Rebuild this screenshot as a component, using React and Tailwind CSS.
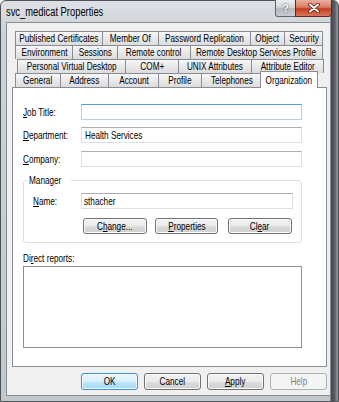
import React from 'react';

const font = "font-['Liberation_Sans',Arial,sans-serif]";

const tabRows = [
  {
    cls: 'ml-[3px]',
    tabs: [
      ['Published Certificates', 'w-[88px]'],
      ['Member Of', 'w-[57px]'],
      ['Password Replication', 'w-[93px]'],
      ['Object', 'w-[35px]'],
      ['Security', 'w-[39px]'],
    ],
  },
  {
    cls: 'ml-[3px]',
    tabs: [
      ['Environment', 'w-[58px]'],
      ['Sessions', 'w-[46px]'],
      ['Remote control', 'w-[74px]'],
      ['Remote Desktop Services Profile', 'w-[133px]'],
    ],
  },
  {
    cls: 'ml-[5px]',
    tabs: [
      ['Personal Virtual Desktop', 'w-[109px]'],
      ['COM+', 'w-[54px]'],
      ['UNIX Attributes', 'w-[74px]'],
      ['Attribute Editor', 'w-[73px]'],
    ],
  },
  {
    cls: 'ml-[3px]',
    tabs: [
      ['General', 'w-[46px]'],
      ['Address', 'w-[49px]'],
      ['Account', 'w-[51px]'],
      ['Profile', 'w-[44px]'],
      ['Telephones', 'w-[61px]'],
    ],
  },
];

// the dialog font is narrow (Tahoma-like); squeeze Liberation Sans to match
function N({ children, left }) {
  return (
    <span className={`inline-block whitespace-nowrap scale-x-[0.78] ${left ? 'origin-left' : 'origin-center'}`}>
      {children}
    </span>
  );
}

function Tab({ label, w, first }) {
  return (
    <div
      className={`${w} ${first ? '' : '-ml-px'} flex h-[14px] shrink-0 justify-center border border-b-0 border-[#898c95] bg-[linear-gradient(#f7f7f7,#e9e9e9_50%,#dcdcdc)] text-[10.5px] leading-[13px] text-black`}
    >
      <N>{label}</N>
    </div>
  );
}

function Field({ label, value, focused }) {
  return (
    <div className="flex items-center">
      <div className="w-[58px] shrink-0 text-[10.5px] leading-[12px]">
        <N left>{label}</N>
      </div>
      <div
        className={`h-[16px] flex-1 overflow-hidden border bg-white pl-[3px] text-[10.5px] leading-[14px] ${
          focused ? 'border-[#b5d0ea] border-t-[#5e9bd3]' : 'border-[#dbdfe6] border-t-[#abadb3]'
        }`}
      >
        <N left>{value}</N>
      </div>
    </div>
  );
}

function Btn({ children, w = 'w-[57px]', h = 'h-[17px]', kind = 'normal' }) {
  const look = {
    normal:
      'border-[#707070] bg-[linear-gradient(#f2f2f2_0%,#ebebeb_50%,#dddddd_51%,#cfcfcf_100%)] text-black shadow-[inset_0_0_0_1px_#fbfbfb]',
    def: 'border-[#3c8fc9] bg-[linear-gradient(#eaf6fd_0%,#d9f0fc_50%,#bee6fd_51%,#a7d9f5_100%)] text-black shadow-[inset_0_0_0_1px_#f4fbff]',
    off: 'border-[#adb2b5] bg-[#f4f4f4] text-[#838383]',
  }[kind];
  return (
    <div className={`flex ${w} ${h} shrink-0 items-center justify-center rounded-[3px] border text-[10.5px] leading-none ${look}`}>
      <N>{children}</N>
    </div>
  );
}

export default function App() {
  return (
    <div className={`h-[402px] w-[339px] bg-white ${font}`}>
      <div className="flex h-full w-full flex-col rounded-t-[6px] border border-[#4d5257] bg-[linear-gradient(to_right,transparent_329px,#44484d_330px,#5c6065_334px,#8a8e93_336px),linear-gradient(#dde1e5,#cdd2d7_30px,#c3c8cd)]">
        {/* title bar */}
        <div className="flex h-[21px] shrink-0 items-start pl-[5px] pr-[6px]">
          <div className="pt-[4px] text-[12px] leading-[14px] text-black">
            <N left>svc_medicat Properties</N>
          </div>
          <div className="ml-auto -mt-px flex">
            <div className="flex h-[17px] w-[21px] items-center justify-center rounded-bl-[3px] border border-t-0 border-[#5f656b] bg-[linear-gradient(#eceef0,#d3d7db_45%,#b4b9be_55%,#c9cdd1)] text-[11px] font-bold leading-none text-white [text-shadow:0_0_2px_#2a2d30]">
              ?
            </div>
            <div className="-ml-px flex h-[17px] w-[37px] items-center justify-center rounded-br-[4px] border border-t-0 border-[#6a241a] bg-[linear-gradient(#eab1a2,#d97a62_45%,#c53d20_55%,#d8775e)]">
              <svg width="12" height="10" viewBox="0 0 12 10">
                <path d="M2 1.5 L10 8.5 M10 1.5 L2 8.5" stroke="#5a1a10" strokeWidth="3.6" strokeLinecap="round" />
                <path d="M2 1.5 L10 8.5 M10 1.5 L2 8.5" stroke="#ffffff" strokeWidth="2" strokeLinecap="round" />
              </svg>
            </div>
          </div>
        </div>

        {/* client area */}
        <div className="mb-[5px] ml-[5px] mr-[7px] flex flex-1 flex-col border border-[#878d93] bg-[#f0f0f0] pb-[5px] pl-[5px] pr-[3px] pt-[8px] text-black">
          <div className="flex flex-col">
            {tabRows.map((row, i) => (
              <div key={i} className={`flex h-[14px] items-start ${row.cls}`}>
                {row.tabs.map(([label, w], j) => (
                  <Tab key={label} label={label} w={w} first={j === 0} />
                ))}
                {i === 3 && (
                  <div className="relative z-10 -ml-[2px] -mt-[2px] flex h-[17px] w-[58px] shrink-0 justify-center border border-b-0 border-[#898c95] bg-white pt-[2px] text-[10.5px] leading-[13px]">
                    <N>Organization</N>
                  </div>
                )}
              </div>
            ))}
          </div>

          <div className="flex flex-1 flex-col border border-[#898c95] bg-white pl-[10px] pr-[24px] pt-[16px]">
            <Field
              focused
              label={
                <>
                  <u className="underline-offset-1">J</u>ob Title:
                </>
              }
              value=""
            />
            <div className="mt-[7px]">
              <Field
                label={
                  <>
                    <u className="underline-offset-1">D</u>epartment:
                  </>
                }
                value="Health Services"
              />
            </div>
            <div className="mt-[8px]">
              <Field
                label={
                  <>
                    <u className="underline-offset-1">C</u>ompany:
                  </>
                }
                value=""
              />
            </div>

            <fieldset className="mt-[7px] rounded-[3px] border border-[#d5dfe5]">
              <legend className="ml-[4px] px-[1px] text-[10.5px] leading-[12px]">
                <N left>Manager</N>
              </legend>
              <div className="pb-[8px] pl-[9px] pr-[8px] pt-[7px]">
                <div className="flex items-center">
                  <div className="w-[48px] shrink-0 text-[10.5px] leading-[12px]">
                    <N left>
                      <u className="underline-offset-1">N</u>ame:
                    </N>
                  </div>
                  <div className="h-[16px] flex-1 border border-[#dbdfe6] border-t-[#abadb3] bg-white pl-[2px] text-[10.5px] leading-[14px]">
                    <N left>sthacher</N>
                  </div>
                </div>
                <div className="mt-[9px] flex">
                  <div className="ml-[50px]">
                    <Btn w="w-[64px]" h="h-[16px]">
                      C<u className="underline-offset-1">h</u>ange...
                    </Btn>
                  </div>
                  <div className="ml-[8px]">
                    <Btn w="w-[63px]" h="h-[16px]">
                      <u className="underline-offset-1">P</u>roperties
                    </Btn>
                  </div>
                  <div className="ml-[10px]">
                    <Btn w="w-[64px]" h="h-[16px]">
                      Cl<u className="underline-offset-1">e</u>ar
                    </Btn>
                  </div>
                </div>
              </div>
            </fieldset>

            <div className="mt-[9px] text-[10.5px] leading-[12px]">
              <N left>
                Di<u className="underline-offset-1">r</u>ect reports:
              </N>
            </div>
            <div className="mt-[2px] h-[82px] border border-[#8e9094] bg-white" />
          </div>

          <div className="mt-[6px] flex justify-end gap-[6px]">
            <Btn kind="def">OK</Btn>
            <Btn>Cancel</Btn>
            <Btn>
              <u className="underline-offset-1">A</u>pply
            </Btn>
            <Btn kind="off">Help</Btn>
          </div>
        </div>
      </div>
    </div>
  );
}
